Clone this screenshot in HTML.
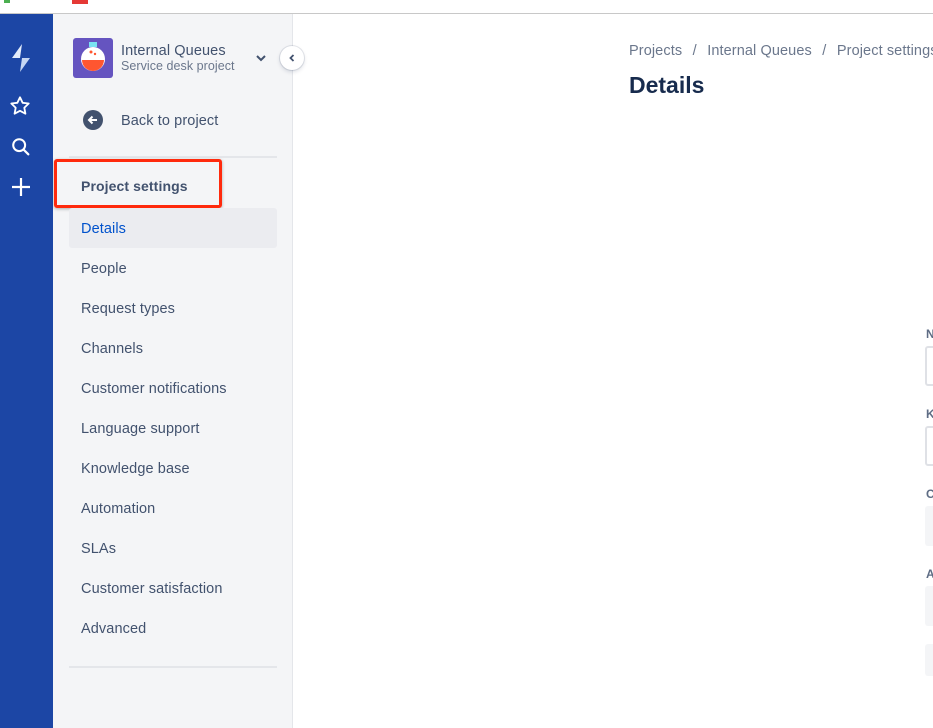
<!DOCTYPE html>
<html><head><style>
body{margin:0;width:933px;height:728px;overflow:hidden;font-family:"Liberation Sans",sans-serif;background:#fff;position:relative}
.a{position:absolute}
.top{left:0;top:0;width:933px;height:13px;background:#fff;border-bottom:1px solid #c8c8c8}
.nav{left:0;top:14px;width:53px;height:714px;background:#1c46a5}
.side{left:53px;top:14px;width:239px;height:714px;background:#f4f5f7;border-right:1px solid #e4e6ea}
.item{position:absolute;left:81px;font-size:14.5px;letter-spacing:0.1px;color:#42526e;margin-top:1px}
.lbl{position:absolute;left:926px;font-size:12px;font-weight:bold;color:#5e6c84}
.in{position:absolute;left:925px;width:20px;height:38px;border:2px solid #dfe1e6;border-radius:3px;box-sizing:border-box}
.g{position:absolute;left:925px;width:20px;border-radius:3px;background:#f4f5f7}
.sl{display:inline-block;width:25px;text-align:center}
</style></head><body>
<div class="a top"></div>
<div class="a" style="left:4px;top:0;width:6px;height:3px;background:#4caf50"></div>
<div class="a" style="left:72px;top:0;width:16px;height:4px;background:#e53935"></div>
<div class="a nav"></div>
<svg class="a" style="left:8px;top:42px" width="26" height="32" viewBox="0 0 26 32"><path d="M14 2 L4 16 L12 16 Z" fill="#e3ecfa"/><path d="M12 30 L22 16 L14 16 Z" fill="#c5d6f3"/></svg>
<svg class="a" style="left:9px;top:95px" width="22" height="22" viewBox="0 0 24 24"><path d="M12 2.5l2.9 6 6.6.8-4.8 4.6 1.2 6.5L12 17.3 6.1 20.4l1.2-6.5L2.5 9.3l6.6-.8z" fill="none" stroke="#fff" stroke-width="2" stroke-linejoin="round"/></svg>
<svg class="a" style="left:10px;top:136px" width="22" height="22" viewBox="0 0 24 24"><circle cx="10" cy="10" r="6.5" fill="none" stroke="#fff" stroke-width="2.2"/><path d="M15 15l5 5" stroke="#fff" stroke-width="2.4" stroke-linecap="round"/></svg>
<svg class="a" style="left:10px;top:176px" width="22" height="22" viewBox="0 0 22 22"><path d="M11 2v18M2 11h18" stroke="#fff" stroke-width="2.2"/></svg>
<div class="a side"></div>
<div class="a" style="left:73px;top:38px;width:40px;height:40px;background:#6554c0;border-radius:3px"></div>
<svg class="a" style="left:73px;top:38px" width="40" height="40" viewBox="0 0 40 40"><rect x="16" y="4" width="8" height="5" fill="#79e2f2"/><circle cx="20" cy="21" r="12" fill="#fff"/><path d="M9 22 A11 11 0 0 0 31 22 Z" fill="#ff5630"/><circle cx="18" cy="14" r="1.5" fill="#ff5630"/><circle cx="22" cy="16" r="1.2" fill="#ff5630"/></svg>
<div class="a" style="left:121px;top:43px;font-size:14.5px;letter-spacing:0.1px;color:#42526e">Internal Queues</div>
<div class="a" style="left:121px;top:59px;font-size:12.5px;letter-spacing:0.05px;color:#6b778c">Service desk project</div>
<svg class="a" style="left:255px;top:53px" width="12" height="10" viewBox="0 0 12 10"><path d="M2 3l4 4 4-4" fill="none" stroke="#42526e" stroke-width="2"/></svg>
<div class="a" style="left:280px;top:46px;width:24px;height:24px;border-radius:50%;background:#fff;box-shadow:0 0 0 1px rgba(9,30,66,.1),0 2px 4px rgba(9,30,66,.15)"></div>
<svg class="a" style="left:286px;top:52px" width="12" height="12" viewBox="0 0 12 12"><path d="M7.5 3L4.5 6l3 3" fill="none" stroke="#42526e" stroke-width="1.8"/></svg>
<div class="a" style="left:83px;top:110px;width:20px;height:20px;border-radius:50%;background:#42526e"></div>
<svg class="a" style="left:83px;top:110px" width="20" height="20" viewBox="0 0 20 20"><path d="M14 10H6M9.5 6.5L6 10l3.5 3.5" fill="none" stroke="#fff" stroke-width="2"/></svg>
<div class="a" style="left:121px;top:113px;font-size:14.5px;letter-spacing:0.1px;color:#42526e">Back to project</div>
<div class="a" style="left:69px;top:156px;width:208px;height:2px;background:#e4e6ea"></div>
<div class="a" style="left:54px;top:159px;width:168px;height:49px;border:3px solid #ff2a0d;border-radius:3px;box-sizing:border-box;box-shadow:0 1px 3px rgba(0,0,0,.3)"></div>
<div class="a" style="left:81px;top:178px;font-size:14px;font-weight:bold;letter-spacing:0.1px;color:#42526e">Project settings</div>
<div class="a" style="left:69px;top:208px;width:208px;height:40px;background:#ebecf0;border-radius:3px"></div>
<div class="item" style="top:220px;color:#0052cc">Details</div>
<div class="item" style="top:260px">People</div>
<div class="item" style="top:300px">Request types</div>
<div class="item" style="top:340px">Channels</div>
<div class="item" style="top:380px">Customer notifications</div>
<div class="item" style="top:420px">Language support</div>
<div class="item" style="top:460px">Knowledge base</div>
<div class="item" style="top:500px">Automation</div>
<div class="item" style="top:540px">SLAs</div>
<div class="item" style="top:580px">Customer satisfaction</div>
<div class="item" style="top:620px">Advanced</div>
<div class="a" style="left:69px;top:666px;width:208px;height:2px;background:#e4e6ea"></div>
<div class="a" style="left:629px;top:43px;font-size:14.5px;letter-spacing:0.1px;color:#6b778c;white-space:nowrap">Projects<span class="sl">/</span>Internal Queues<span class="sl">/</span>Project settings</div>
<div class="a" style="left:629px;top:72px;font-size:23px;font-weight:bold;color:#172b4d">Details</div>
<div class="lbl" style="top:327px">N</div><div class="in" style="top:346px;height:40px"></div>
<div class="lbl" style="top:407px">K</div><div class="in" style="top:426px;height:40px"></div>
<div class="lbl" style="top:487px">C</div><div class="g" style="top:506px;height:40px"></div>
<div class="lbl" style="top:567px">A</div><div class="g" style="top:586px;height:40px"></div>
<div class="g" style="top:644px;height:32px"></div>
</body></html>
